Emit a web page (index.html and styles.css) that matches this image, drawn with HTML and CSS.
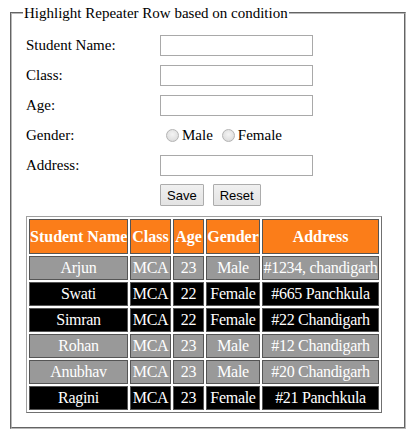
FILE: index.html
```html
<!DOCTYPE html>
<html lang="en">
<head>
    <meta charset="UTF-8">
    <title>Highlight Repeater Row</title>
    <link rel="stylesheet" href="styles.css">
</head>
<body>

    <fieldset class="box">
        <legend>Highlight Repeater Row based on condition</legend>

        <div class="form">
            <label class="lbl">Student Name:</label>
            <div class="field"><input type="text" class="txt"></div>

            <label class="lbl">Class:</label>
            <div class="field"><input type="text" class="txt"></div>

            <label class="lbl">Age:</label>
            <div class="field"><input type="text" class="txt"></div>

            <label class="lbl gender">Gender:</label>
            <div class="field gender">
                <span class="opt"><input type="radio" name="gender" class="radio">Male</span>
                <span class="opt"><input type="radio" name="gender" class="radio">Female</span>
            </div>

            <label class="lbl">Address:</label>
            <div class="field"><input type="text" class="txt"></div>

            <div></div>
            <div class="buttons">
                <button type="button" class="btn">Save</button>
                <button type="button" class="btn">Reset</button>
            </div>
        </div>

        <table class="grid" cellspacing="2">
            <thead>
                <tr>
                    <th class="c-name">Student Name</th>
                    <th class="c-class">Class</th>
                    <th class="c-age">Age</th>
                    <th class="c-gender">Gender</th>
                    <th class="c-addr">Address</th>
                </tr>
            </thead>
            <tbody>
                <tr class="male">
                    <td>Arjun</td><td>MCA</td><td>23</td><td>Male</td><td>#1234, chandigarh</td>
                </tr>
                <tr class="female">
                    <td>Swati</td><td>MCA</td><td>22</td><td>Female</td><td>#665 Panchkula</td>
                </tr>
                <tr class="female">
                    <td>Simran</td><td>MCA</td><td>22</td><td>Female</td><td>#22 Chandigarh</td>
                </tr>
                <tr class="male">
                    <td>Rohan</td><td>MCA</td><td>23</td><td>Male</td><td>#12 Chandigarh</td>
                </tr>
                <tr class="male">
                    <td>Anubhav</td><td>MCA</td><td>23</td><td>Male</td><td>#20 Chandigarh</td>
                </tr>
                <tr class="female">
                    <td>Ragini</td><td>MCA</td><td>23</td><td>Female</td><td>#21 Panchkula</td>
                </tr>
            </tbody>
        </table>
    </fieldset>

</body>
</html>
```

FILE: styles.css
```css
body {
    margin: 4px 8px;
    font-family: "Liberation Serif", "Times New Roman", serif;
    font-size: 15px;
    color: #000;
    background: #fff;
}

.box {
    box-sizing: border-box;
    width: 396px;
    margin: 0 0 0 2px;
    padding: 8px 11px 14px 11px;
    border: 2px groove #b8b8b8;
    min-width: 0;
}

.box legend {
    padding: 0 1px;
    line-height: 18px;
}

.form {
    display: grid;
    grid-template-columns: 134px auto;
    grid-auto-rows: 30px;
    margin-left: 3px;
    align-items: center;
}

.lbl {
    line-height: 18px;
    align-self: start;
    padding-top: 6px;
}

.field {
    display: flex;
    align-items: center;
}

.field.gender {
    height: 31px;
}

.txt {
    box-sizing: border-box;
    width: 153px;
    height: 21px;
    margin: 0;
    border: 1px solid #a9a9a9;
    padding: 0 2px;
    font: 15px "Liberation Serif", serif;
}

.opt {
    display: flex;
    align-items: center;
    line-height: 18px;
}

.opt + .opt {
    margin-left: 3px;
}

.radio {
    appearance: none;
    -webkit-appearance: none;
    width: 13px;
    height: 13px;
    margin: 0 3px 0 6px;
    border: 1px solid #b4b4b4;
    border-radius: 50%;
    box-sizing: border-box;
    background: radial-gradient(circle at 50% 40%, #f4f4f4 0%, #e2e2e2 60%, #d2d2d2 100%);
}

.buttons {
    display: flex;
    gap: 9px;
    height: 22px;
    align-self: start;
    margin-top: 4px;
}

.btn {
    height: 22px;
    margin: 0;
    padding: 0 6px;
    border: 1px solid #acacac;
    border-radius: 1px;
    background: linear-gradient(#f0f0f0, #e3e3e3);
    font: 13px "Liberation Sans", Arial, sans-serif;
    color: #000;
}

.grid {
    margin: 6px 0 0 3px;
    width: 356px;
    table-layout: fixed;
    border: 1px solid;
    border-color: #a0a0a0 #707070 #707070 #a0a0a0;
    color: #fff;
    font-family: "Liberation Serif", "Times New Roman", serif;
    font-size: 16px;
}

.grid th,
.grid td {
    padding: 0;
    border: 1px solid #555;
    text-align: center;
    white-space: nowrap;
    overflow: hidden;
}

.grid .c-name { width: 97px; }
.grid .c-class { width: 39px; }
.grid .c-age { width: 29px; }
.grid .c-gender { width: 52px; }
.grid .c-addr { width: 115px; }

.grid th {
    background: #fb7d19;
    font-weight: bold;
    line-height: 33px;
}

.grid td {
    line-height: 22px;
    letter-spacing: -0.3px;
}

.grid .male td {
    background: #999999;
}

.grid .female td {
    background: #000;
}
```
